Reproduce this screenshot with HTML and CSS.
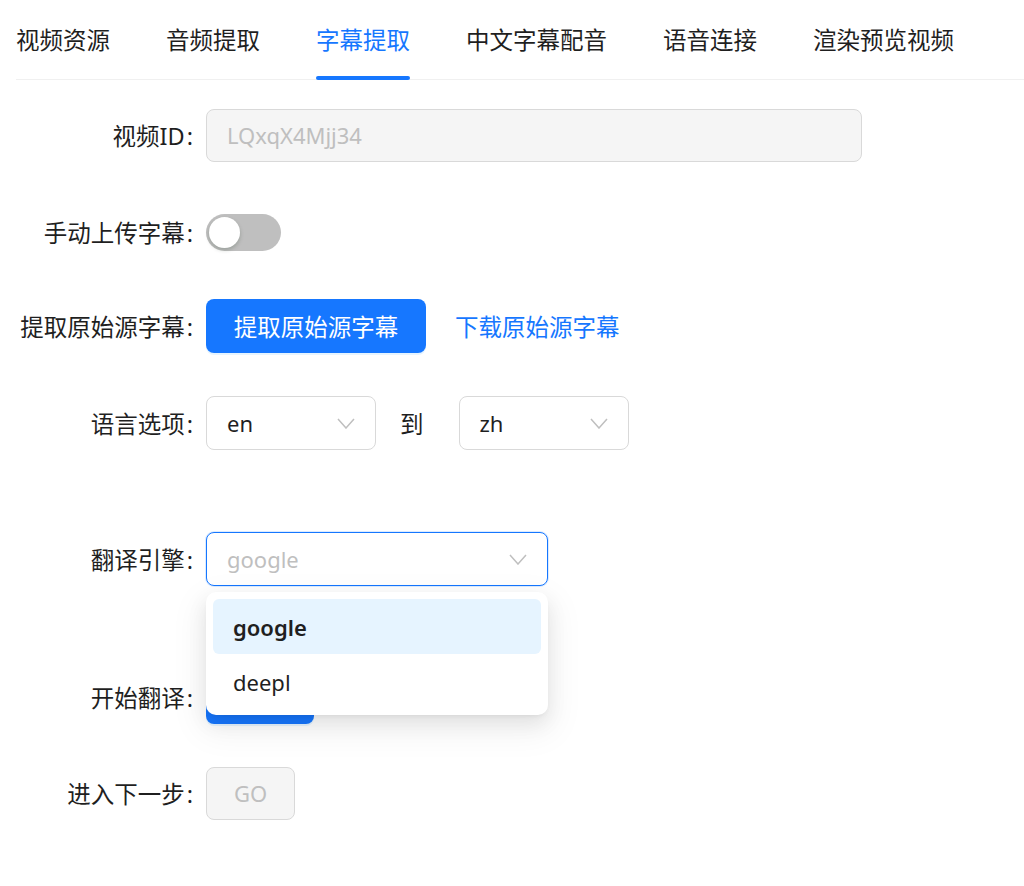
FILE: index.html
```html
<!DOCTYPE html>
<html lang="zh">
<head>
<meta charset="utf-8">
<title>字幕提取</title>
<link rel="stylesheet" href="styles.css">
</head>
<body>
<div class="page">
  <nav class="tabs">
    <div class="tab">视频资源</div>
    <div class="tab">音频提取</div>
    <div class="tab active">字幕提取</div>
    <div class="tab">中文字幕配音</div>
    <div class="tab">语音连接</div>
    <div class="tab">渲染预览视频</div>
  </nav>

  <form class="form">
    <div class="row">
      <label class="label">视频ID</label>
      <div class="input disabled wide">LQxqX4Mjj34</div>
    </div>

    <div class="row gap-sm">
      <label class="label">手动上传字幕</label>
      <div class="switch"><span class="knob"></span></div>
    </div>

    <div class="row">
      <label class="label">提取原始源字幕</label>
      <button type="button" class="btn primary extract">提取原始源字幕</button>
      <a class="link">下载原始源字幕</a>
    </div>

    <div class="row gap-lg">
      <label class="label">语言选项</label>
      <div class="select lang"><span class="val">en</span><svg class="chev" viewBox="0 0 18 11"><polyline points="1,1 9,10 17,1"/></svg></div>
      <span class="to">到</span>
      <div class="select lang"><span class="val">zh</span><svg class="chev" viewBox="0 0 18 11"><polyline points="1,1 9,10 17,1"/></svg></div>
    </div>

    <div class="row gap-lg2">
      <label class="label">翻译引擎</label>
      <div class="select engine focused">
        <span class="val placeholder">google</span><svg class="chev" viewBox="0 0 18 11"><polyline points="1,1 9,10 17,1"/></svg>
        <div class="dropdown">
          <div class="option selected">google</div>
          <div class="option">deepl</div>
        </div>
      </div>
    </div>

    <div class="row gap-xs">
      <label class="label">开始翻译</label>
      <button type="button" class="btn primary translate">翻译</button>
    </div>

    <div class="row">
      <label class="label">进入下一步</label>
      <button type="button" class="btn disabled-btn go">GO</button>
    </div>
  </form>
</div>
</body>
</html>
```

FILE: styles.css
```css
* { box-sizing: border-box; }

html, body {
  margin: 0;
  padding: 0;
  background: #ffffff;
}

body {
  font-family: "Noto Sans", "Noto Sans CJK SC", sans-serif;
  color: #1f1f1f;
  font-size: 23.5px;
}

.page {
  padding-left: 16px;
}

.tabs {
  display: flex;
  gap: 56px;
  height: 80px;
  border-bottom: 1px solid #f0f0f0;
}

.tab {
  position: relative;
  padding-top: 22px;
  line-height: 36px;
  font-size: 23.5px;
  color: #1f1f1f;
  white-space: nowrap;
}

.tab.active {
  color: #1677ff;
}

.tab.active::after {
  content: "";
  position: absolute;
  left: 0;
  right: 0;
  bottom: -1px;
  height: 4px;
  background: #1677ff;
  border-radius: 2px;
}

.form {
  margin: 28px 0 0;
  display: flex;
  flex-direction: column;
}

.row {
  display: flex;
  align-items: center;
  height: 54px;
  margin-bottom: 43px;
}

.row.gap-xs { margin-bottom: 42px; }
.row.gap-sm { margin-bottom: 40px; }
.row.gap-lg { margin-bottom: 82px; }
.row.gap-lg2 { margin-bottom: 84px; }

.label {
  width: 190px;
  flex: none;
  text-align: right;
  padding-right: 13px;
  font-size: 23.5px;
  color: #1f1f1f;
  white-space: nowrap;
}

.label::after {
  content: ":";
  margin-left: 2px;
}

.input {
  height: 53px;
  border: 1px solid #d9d9d9;
  border-radius: 8px;
  padding: 0 20px;
  display: flex;
  align-items: center;
  font-size: 22px;
}

.input.disabled {
  background: #f5f5f5;
  color: #bfbfbf;
}

.input.wide { width: 656px; }

.switch {
  position: relative;
  width: 75px;
  height: 37px;
  border-radius: 19px;
  background: #bfbfbf;
}

.knob {
  position: absolute;
  left: 3px;
  top: 3px;
  width: 31px;
  height: 31px;
  border-radius: 50%;
  background: #ffffff;
  box-shadow: 0 2px 4px rgba(0, 35, 11, 0.2);
}

.btn {
  height: 54px;
  border-radius: 8px;
  font-family: "Noto Sans", "Noto Sans CJK SC", sans-serif;
  font-size: 23.5px;
  border: 1px solid transparent;
  padding: 0;
  cursor: pointer;
}

.btn.primary {
  background: #1677ff;
  color: #ffffff;
  box-shadow: 0 2px 0 rgba(5, 145, 255, 0.1);
}

.btn.extract { width: 220px; }
.btn.translate { width: 108px; }

.btn.disabled-btn {
  background: #f5f5f5;
  border-color: #d9d9d9;
  color: #bfbfbf;
  font-size: 22px;
}

.btn.go { width: 89px; height: 53px; }

.link {
  margin-left: 29px;
  color: #1677ff;
  font-size: 23.5px;
  text-decoration: none;
}

.select {
  position: relative;
  height: 54px;
  border: 1px solid #d9d9d9;
  border-radius: 8px;
  display: flex;
  align-items: center;
  justify-content: space-between;
  padding: 0 20px;
  font-size: 22px;
  background: #fff;
}

.select.lang { width: 170px; }

.select.engine {
  width: 342px;
}

.select.focused {
  border-color: #1677ff;
  box-shadow: 0 0 0 1px rgba(22, 119, 255, 0.15);
}

.val.placeholder { color: #bfbfbf; }

.chev {
  width: 18px;
  height: 11px;
  fill: none;
  stroke: #bfbfbf;
  stroke-width: 1.5;
}

.to {
  margin: 0 35px 0 24px;
  font-size: 23.5px;
}

.dropdown {
  position: absolute;
  top: 59px;
  left: -1px;
  width: 342px;
  padding: 7px 7px 6px;
  background: #ffffff;
  border-radius: 10px;
  box-shadow: 0 8px 20px 0 rgba(0, 0, 0, 0.08), 0 3px 6px -4px rgba(0, 0, 0, 0.12), 0 12px 32px 8px rgba(0, 0, 0, 0.05);
  z-index: 10;
}

.option {
  height: 55px;
  display: flex;
  align-items: center;
  padding-left: 20px;
  border-radius: 6px;
  font-size: 22px;
  color: #1f1f1f;
}

.option.selected {
  background: #e6f4ff;
  font-weight: 600;
}
```
